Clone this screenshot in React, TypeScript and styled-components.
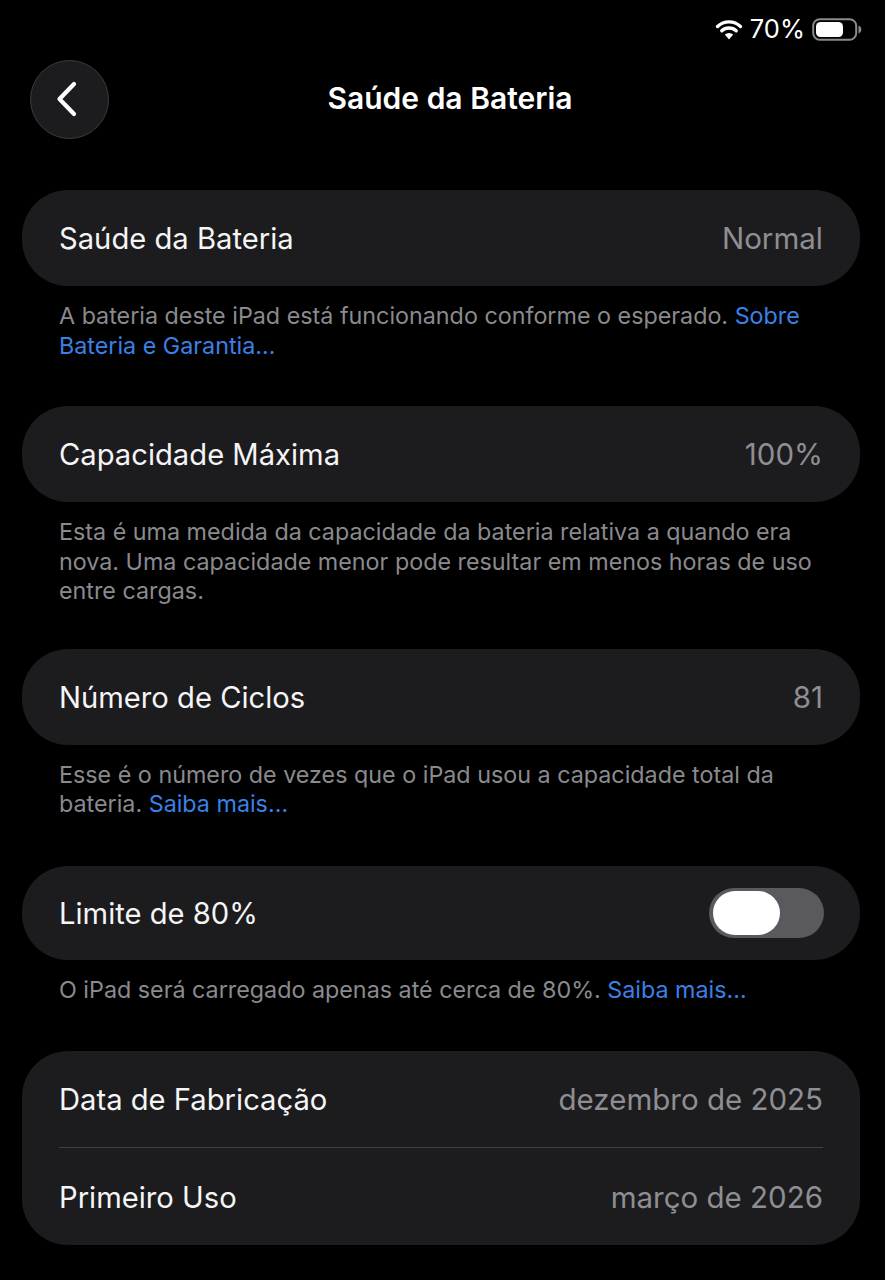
import React from "react";
import styled, { createGlobalStyle } from "styled-components";

const Global = createGlobalStyle`
  html, body { margin: 0; padding: 0; background: #000; }
  body { font-family: Inter, "Liberation Sans", sans-serif; -webkit-font-smoothing: antialiased; }
`;

const Page = styled.div`
  width: 885px;
  height: 1280px;
  overflow: hidden;
  background: #000;
  color: #f5f5f6;
  display: flex;
  flex-direction: column;
`;

const StatusBar = styled.div`
  flex: none;
  height: 59px;
  box-sizing: border-box;
  padding: 14px 23px 0 0;
  display: flex;
  justify-content: flex-end;
  align-items: flex-start;
  gap: 7px;
`;

const StatusText = styled.span`
  font-size: 25.5px;
  line-height: 30px;
  font-weight: 400;
  color: #fff;
`;

const StatusIcon = styled.svg`
  display: block;
  margin-top: 3px;
`;

const NavBar = styled.div`
  flex: none;
  position: relative;
  height: 80px;
  padding-left: 30px;
  margin-bottom: 51px;
  display: flex;
  align-items: center;
`;

const BackButton = styled.div`
  width: 79px;
  height: 79px;
  box-sizing: border-box;
  border-radius: 50%;
  background: #1c1c1e;
  border: 1px solid #3c3c3e;
  display: flex;
  align-items: center;
  justify-content: center;
`;

const Title = styled.h1`
  position: absolute;
  left: 15px;
  right: 0;
  top: 21px;
  margin: 0;
  text-align: center;
  font-size: 30px;
  line-height: 36px;
  font-weight: 600;
  color: #fff;
`;

const Section = styled.section<{ $gap?: number }>`
  flex: none;
  padding: 0 25px 0 22px;
  margin-bottom: ${(p) => p.$gap ?? 46}px;
`;

const Card = styled.div`
  background: #1c1c1e;
  border-radius: 46px;
  padding: 0 37px;
`;

const Row = styled.div<{ $height?: number; $divider?: boolean }>`
  height: ${(p) => p.$height ?? 96}px;
  padding-top: 2px;
  display: flex;
  align-items: center;
  justify-content: space-between;
  box-sizing: border-box;
  border-bottom: ${(p) => (p.$divider ? "1px solid #414143" : "none")};
`;

const Label = styled.span`
  font-size: 29.2px;
  line-height: 36px;
  color: #f5f5f6;
`;

const Value = styled.span`
  font-size: 29.5px;
  line-height: 36px;
  margin-top: -2px;
  color: #8e8e93;
`;

const Footer = styled.p`
  margin: 15px 0 0;
  padding: 0 37px;
  font-size: 23.3px;
  line-height: 29.5px;
  color: #8a8a8e;
`;

const Link = styled.span`
  color: #3b80e6;
`;

const Toggle = styled.div`
  width: 115px;
  height: 50px;
  margin: -2px -1px 0 0;
  border-radius: 25px;
  background: #59595e;
  box-sizing: border-box;
  padding: 3px 4px;
  display: flex;
`;

const Knob = styled.div`
  width: 67px;
  height: 44px;
  border-radius: 22px;
  background: #fff;
`;

export default function App() {
  return (
    <Page>
      <Global />
      <StatusBar>
        <StatusIcon width="28" height="24" viewBox="0 0 28 24">
          <path
            d="M2.5 9.5 A16.5 16.5 0 0 1 25.5 9.5 M6.8 13.8 A10.5 10.5 0 0 1 21.2 13.8"
            fill="none"
            stroke="#fff"
            strokeWidth="3.4"
            strokeLinecap="round"
          />
          <path d="M14 22.5 L9.8 17.6 A6 6 0 0 1 18.2 17.6 Z" fill="#fff" />
        </StatusIcon>
        <StatusText>70%</StatusText>
        <StatusIcon width="50" height="24" viewBox="0 0 50 24">
          <rect x="1.2" y="2.2" width="43" height="20.6" rx="6.5" fill="none" stroke="#8a8a8a" strokeWidth="2" />
          <rect x="4" y="5" width="27" height="15" rx="4.5" fill="#fff" />
          <path d="M46.5 8.5 C48.5 9.2 49.3 10.5 49.3 12.5 C49.3 14.5 48.5 15.8 46.5 16.5 Z" fill="#8a8a8a" />
        </StatusIcon>
      </StatusBar>
      <NavBar>
        <BackButton>
          <svg width="28" height="40" viewBox="0 0 28 40" style={{ marginLeft: -6 }}>
            <path
              d="M21 5 L6.5 20 L21 35"
              fill="none"
              stroke="#fff"
              strokeWidth="4.2"
              strokeLinecap="round"
              strokeLinejoin="round"
            />
          </svg>
        </BackButton>
        <Title>Saúde da Bateria</Title>
      </NavBar>

      <Section>
        <Card>
          <Row>
            <Label>Saúde da Bateria</Label>
            <Value>Normal</Value>
          </Row>
        </Card>
        <Footer>
          A bateria deste iPad está funcionando conforme o esperado. <Link>Sobre Bateria e Garantia…</Link>
        </Footer>
      </Section>

      <Section $gap={43}>
        <Card>
          <Row>
            <Label>Capacidade Máxima</Label>
            <Value>100%</Value>
          </Row>
        </Card>
        <Footer>
          Esta é uma medida da capacidade da bateria relativa a quando era nova. Uma capacidade menor pode resultar em
          menos horas de uso entre cargas.
        </Footer>
      </Section>

      <Section $gap={47}>
        <Card>
          <Row>
            <Label>Número de Ciclos</Label>
            <Value>81</Value>
          </Row>
        </Card>
        <Footer>
          Esse é o número de vezes que o iPad usou a capacidade total da bateria. <Link>Saiba mais…</Link>
        </Footer>
      </Section>

      <Section $gap={47}>
        <Card>
          <Row $height={94}>
            <Label>Limite de 80%</Label>
            <Toggle>
              <Knob />
            </Toggle>
          </Row>
        </Card>
        <Footer>
          O iPad será carregado apenas até cerca de 80%. <Link>Saiba mais…</Link>
        </Footer>
      </Section>

      <Section $gap={0}>
        <Card>
          <Row $height={97} $divider>
            <Label>Data de Fabricação</Label>
            <Value>dezembro de 2025</Value>
          </Row>
          <Row $height={97}>
            <Label>Primeiro Uso</Label>
            <Value>março de 2026</Value>
          </Row>
        </Card>
      </Section>
    </Page>
  );
}
